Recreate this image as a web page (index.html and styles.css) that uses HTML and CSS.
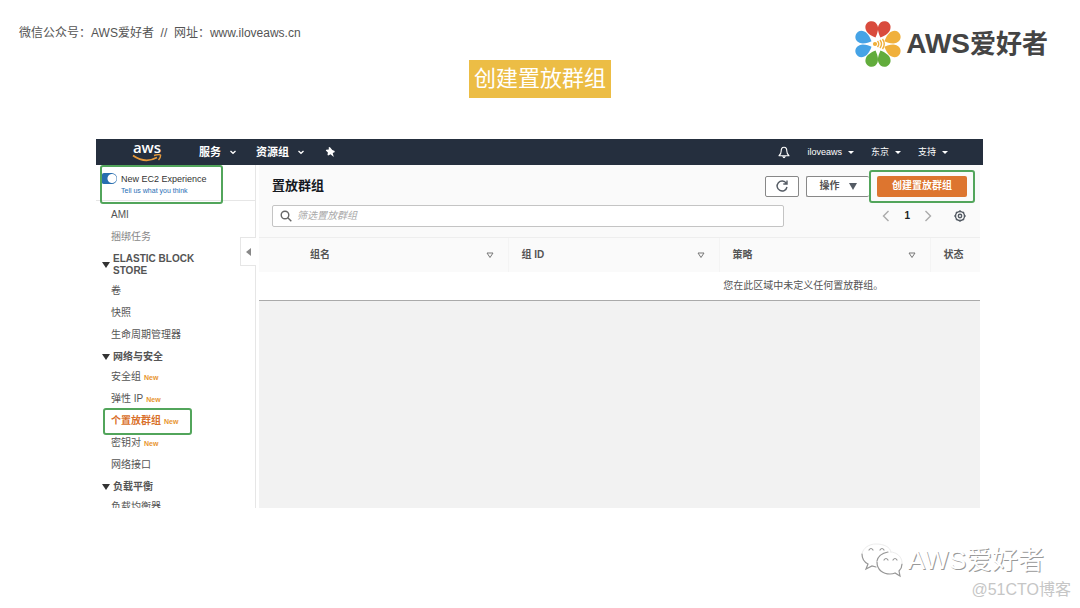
FILE: index.html
```html
<!DOCTYPE html>
<html lang="zh-CN">
<head>
<meta charset="utf-8">
<meta name="viewport" content="width=device-width, initial-scale=1">
<title>创建置放群组</title>
<link rel="stylesheet" href="styles.css">
</head>
<body>
<div class="slide">
  <header class="slide-header">
    <p class="account">微信公众号：AWS爱好者&nbsp; //&nbsp; 网址：www.iloveaws.cn</p>
    <div class="brand">
      <svg class="brand-mark" viewBox="-24 -24 48 48" aria-hidden="true">
        <defs>
          <path id="petal" d="M0-7C-2-9-6.200-13-6.200-17.500C-6.200-21.500-3.500-24 0-24S6.200-21.500 6.200-17.500C6.200-13 2-9 0-7Z"/>
        </defs>
        <g fill="#d94b3d"><use href="#petal" transform="rotate(-21)"/><use href="#petal" transform="rotate(21)"/></g>
        <g fill="#f0b03c"><use href="#petal" transform="rotate(67)"/><use href="#petal" transform="rotate(113)"/></g>
        <g fill="#62ac3c"><use href="#petal" transform="rotate(159)"/><use href="#petal" transform="rotate(201)"/></g>
        <g fill="#45a3e6"><use href="#petal" transform="rotate(247)"/><use href="#petal" transform="rotate(293)"/></g>
        <g fill="none" stroke="#f0b03c" stroke-width="1.400"><circle cx="-3" cy="0" r="1.400" fill="#f0b03c"/><path d="M-.500-3Q2 0-.500 3M2-4Q5 0 2 4M4.500-5Q8 0 4.500 5"/></g>
      </svg>
      <span class="brand-name"><span class="brand-latin">AWS</span>爱好者</span>
    </div>
  </header>

  <h1 class="slide-title">创建置放群组</h1>

  <section class="console">
    <nav class="topbar">
      <a class="aws" href="#" aria-label="aws">
        <span class="aws-word">aws</span>
        <svg class="aws-smile" viewBox="0 0 30 9" aria-hidden="true"><path d="M1 1.500Q13 10 25 3.500" fill="none" stroke="#e79a3c" stroke-width="1.800"/><path d="M22 1.500Q27 0 28.500 1Q29 3 26.500 6" fill="none" stroke="#e79a3c" stroke-width="1.400"/></svg>
      </a>
      <button class="menu services">服务<svg class="chev" viewBox="0 0 8 8"><path d="M1.500 3L4 5.300L6.500 3"/></svg></button>
      <button class="menu">资源组<svg class="chev" viewBox="0 0 8 8"><path d="M1.500 3L4 5.300L6.500 3"/></svg></button>
      <button class="icon-button" aria-label="固定"><svg class="pin" viewBox="0 0 12 12"><path d="M4.800 1L6 1.200L8.300 4L10.700 5L10.500 6.200L8.700 7L9.800 11L6.500 8.200L4.300 9.500L3.500 9L3.900 6.500L1.800 4.500L2.200 3.800L4.800 3.600Z" fill="#fff"/></svg></button>
      <div class="topbar-right">
        <button class="icon-button" aria-label="通知"><svg class="bell" viewBox="0 0 12 13"><path d="M6 1.300C3.800 1.300 3.200 3 3.200 5C3.200 7.500 2.500 8.500 1 9.700H11C9.500 8.500 8.800 7.500 8.800 5C8.800 3 8.200 1.300 6 1.300ZM4.800 10.300Q6 13 7.200 10.300" fill="none" stroke="#fff" stroke-width="1.100" stroke-linejoin="round"/></svg></button>
        <button class="menu small">iloveaws<i class="caret"></i></button>
        <button class="menu small">东京<i class="caret"></i></button>
        <button class="menu small">支持<i class="caret"></i></button>
      </div>
    </nav>

    <div class="workspace">
      <aside class="sidebar">
        <div class="experience">
          <div class="experience-box marked">
            <input class="switch" type="checkbox" id="experience" checked>
            <div>
              <label for="experience">New EC2 Experience</label>
              <a href="#">Tell us what you think</a>
            </div>
          </div>
        </div>
        <ul class="links">
          <li><a href="#">AMI</a></li>
          <li><a class="muted" href="#">捆绑任务</a></li>
        </ul>
        <button class="group">ELASTIC BLOCK STORE</button>
        <ul class="links">
          <li><a href="#">卷</a></li>
          <li><a href="#">快照</a></li>
          <li><a href="#">生命周期管理器</a></li>
        </ul>
        <button class="group">网络与安全</button>
        <ul class="links">
          <li><a href="#">安全组<span class="new">New</span></a></li>
          <li><a href="#">弹性 IP<span class="new">New</span></a></li>
          <li><a class="current" href="#">个置放群组<span class="new">New</span></a></li>
          <li><a href="#">密钥对<span class="new">New</span></a></li>
          <li><a href="#">网络接口</a></li>
        </ul>
        <button class="group">负载平衡</button>
        <ul class="links">
          <li><a href="#">负载均衡器</a></li>
        </ul>
      </aside>
      <button class="collapse" aria-label="折叠导航"></button>

      <main class="content">
        <div class="panel-head">
          <div class="title-row">
            <h2>置放群组</h2>
            <button class="btn refresh" aria-label="刷新"><svg viewBox="0 0 14 14"><path d="M11.300 4.300A5 5 0 1 0 12 8M12 1.500V5H8.300" fill="none" stroke="#545b64" stroke-width="1.400"/></svg></button>
            <button class="btn actions">操作<i class="triangle"></i></button>
            <div class="create-box marked"><button class="create">创建置放群组</button></div>
          </div>
          <div class="filter-row">
            <label class="search">
              <svg viewBox="0 0 12 12" aria-hidden="true"><circle cx="5" cy="5" r="3.800"/><path d="M7.800 7.800L11.300 11.300"/></svg>
              <input type="text" placeholder="筛选置放群组" aria-label="筛选置放群组">
            </label>
            <div class="pager">
              <button class="icon-button" aria-label="上一页"><svg class="arrow" viewBox="0 0 8 12"><path d="M6.500 1L1.500 6L6.500 11"/></svg></button>
              <span class="page">1</span>
              <button class="icon-button" aria-label="下一页"><svg class="arrow" viewBox="0 0 8 12"><path d="M1.500 1L6.500 6L1.500 11"/></svg></button>
              <button class="icon-button settings" aria-label="设置"><svg class="gear" viewBox="0 0 12 12"><circle cx="6" cy="6" r="4.500"/><circle cx="6" cy="6" r="1.700"/><path d="M6 .300V1.500M6 10.500V11.700M.300 6H1.500M10.500 6H11.700M2 2L2.800 2.800M9.200 9.200L10 10M2 10L2.800 9.200M9.200 2.800L10 2"/></svg></button>
            </div>
          </div>
        </div>
        <table class="groups">
          <colgroup><col class="col-check"><col><col><col><col class="col-state"></colgroup>
          <thead>
            <tr>
              <td></td>
              <th scope="col"><span class="th">组名<svg class="sort" viewBox="0 0 8 7"><path d="M1 1H7L4 5.500Z"/></svg></span></th>
              <th scope="col"><span class="th">组 ID<svg class="sort" viewBox="0 0 8 7"><path d="M1 1H7L4 5.500Z"/></svg></span></th>
              <th scope="col"><span class="th">策略<svg class="sort" viewBox="0 0 8 7"><path d="M1 1H7L4 5.500Z"/></svg></span></th>
              <th scope="col"><span class="th">状态</span></th>
            </tr>
          </thead>
          <tbody><tr><td class="empty" colspan="5">您在此区域中未定义任何置放群组。</td></tr></tbody>
        </table>
      </main>
    </div>
  </section>

  <footer class="slide-footer">
    <div class="watermark">
      <svg class="wechat" viewBox="0 0 44 36" aria-hidden="true">
        <g fill="none" stroke="#ededed" stroke-width="1"><path d="M2 12C3 6 9 2 16 2C24 2 30 5 31 10"/><path d="M30 10C37 10 42 15 42 21"/></g>
        <g fill="none" stroke="#969696" stroke-width="1.200" stroke-linecap="round"><path d="M2 12C2 17 4 20 8 22L6 27L12 24L16 25"/><path d="M17 20C17 28 23 32 30 32Q33 32 35 31L40 34L39 29Q42 26 42 22"/><path d="M17 19C18 14 23 11 28 10"/><path d="M9 8Q11 5 13 8M20 8Q22 5 24 8M24 18Q26 15 28 18M33 18Q35 15 37 18"/></g>
      </svg>
      <span>AWS爱好者</span>
    </div>
    <p class="credit">@51CTO博客</p>
  </footer>
</div>
</body>
</html>
```
FILE: styles.css
```css
* { box-sizing: border-box; }

body {
  margin: 0;
  background: #fff;
  color: #545454;
  font-family: "Liberation Sans", "Noto Sans CJK SC", sans-serif;
  font-size: 10px;
  line-height: 12px;
}

h1, h2, p, ul { margin: 0; padding: 0; }
ul { list-style: none; }
a { color: inherit; text-decoration: none; }
button, input { font: inherit; color: inherit; }
button { margin: 0; padding: 0; border: 0; background: none; cursor: pointer; }
svg { display: block; flex: none; }

.slide {
  display: flex;
  flex-direction: column;
  height: 100vh;
  min-height: 480px;
}

.slide-header {
  display: flex;
  justify-content: space-between;
  align-items: flex-start;
  height: 60px;
  padding: 20px 32px 0 19px;
}
.account { padding-top: 4px; font-size: 12px; line-height: 18px; }
.brand { display: flex; align-items: center; gap: 4px; }
.brand-mark { width: 48px; height: 48px; }
.brand-name {
  display: flex;
  align-items: baseline;
  color: #444;
  font-size: 26px;
  font-weight: 700;
  line-height: 36px;
}
.brand-latin { font-size: 28px; }

.slide-title {
  align-self: center;
  padding: 0 5px;
  background: #ecbd45;
  color: #fff;
  font-size: 22px;
  font-weight: 400;
  line-height: 38px;
}

.console {
  display: flex;
  flex: 1;
  flex-direction: column;
  min-height: 0;
  margin: 41px 97px 0 96px;
}

.topbar {
  display: flex;
  flex: none;
  align-items: center;
  height: 26px;
  padding: 0 35px 0 36px;
  background: #252f3e;
  color: #fff;
}
.aws { display: flex; flex-direction: column; align-items: center; width: 30px; }
.aws-word { padding-bottom: 1px; font-family: "Open Sans", sans-serif; font-size: 15px; font-weight: 600; line-height: 12px; }
.aws-smile { width: 30px; height: 9px; }
.menu { display: flex; align-items: center; gap: 8px; margin-right: 19px; font-size: 11px; font-weight: 700; }
.services { margin-left: 37px; }
.chev { width: 8px; height: 8px; fill: none; stroke: #fff; stroke-width: 1.300; }
.pin { width: 12px; height: 12px; }
.icon-button { display: block; }
.bell { width: 12px; height: 13px; }
.topbar-right { display: flex; align-items: center; gap: 17px; margin-left: auto; }
.menu.small { gap: 6px; margin: 0; font-size: 9px; font-weight: 400; }
.caret { border: 3px solid transparent; border-top-color: #fff; border-bottom: 0; }

.workspace { position: relative; display: flex; flex: 1; min-height: 0; padding-right: 3px; }

.sidebar {
  flex: none;
  width: 160px;
  overflow: hidden;
  border-right: 1px solid #e6e6e6;
}
.marked { border: 2px solid #52a55b; border-radius: 3px; }
.experience { height: 36px; margin-bottom: 3px; padding-left: 4px; border-bottom: 1px solid #e6e6e6; }
.experience-box { display: flex; gap: 4px; width: 123px; height: 39px; padding: 6px 0 0; }
.experience-box label, .experience-box a { display: block; }
.experience-box label { color: #333; font-size: 9px; line-height: 13px; }
.experience-box a { color: #276eb5; font-size: 7px; line-height: 10px; white-space: nowrap; }
.switch {
  appearance: none;
  flex: none;
  width: 15px;
  height: 11px;
  margin: 0;
  border-radius: 2px 6px 6px 2px;
  background: radial-gradient(circle at 10px 50%, #fff 4px, #286eb0 5px);
}

.links { padding-left: 15px; }
.links li { height: 22px; line-height: 22px; }
.links a { position: relative; display: inline-block; }
.muted { color: #888; }
.new { margin-left: 3px; color: #e8952f; font-size: 7px; font-weight: 700; }
.current { color: #d9702a; font-weight: 700; }
.current::after {
  content: "";
  position: absolute;
  inset: -2px -14px -2px -8px;
  border: 2px solid #52a55b;
  border-radius: 3px;
}
.group {
  display: flex;
  align-items: center;
  gap: 3px;
  width: 110px;
  padding: 5px 0 3px 6px;
  font-weight: 700;
  text-align: left;
}
.group::before {
  content: "";
  flex: none;
  border: 4px solid transparent;
  border-top: 6px solid #333;
  border-bottom: 0;
}

.collapse {
  position: absolute;
  top: 72px;
  left: 144px;
  display: grid;
  place-items: center;
  width: 16px;
  height: 29px;
  border: 1px solid #e6e6e6;
  border-right: 0;
  background: #fff;
}
.collapse::before { content: ""; border: 4px solid transparent; border-right: 5px solid #888; border-left: 0; }

.content { flex: 1; min-width: 0; margin-left: 3px; background: #f2f2f2; }
.panel-head { padding: 4px 5px 10px 13px; border-bottom: 1px solid #eee; background: #fafafa; }
.title-row { display: flex; align-items: center; height: 34px; }
.title-row h2 { margin-right: auto; color: #16191f; font-size: 13px; line-height: 20px; }
.btn {
  display: flex;
  align-items: center;
  justify-content: center;
  height: 21px;
  border: 1px solid #888;
  border-radius: 2px;
  background: #fff;
  font-weight: 700;
}
.refresh { width: 34px; margin-right: 7px; }
.refresh svg { width: 14px; height: 14px; }
.actions { gap: 9px; width: 63px; border-right: 0; }
.triangle { border: 4px solid transparent; border-top: 7px solid #545b64; border-bottom: 0; }
.create-box { padding: 4px 6px; }
.create { display: block; width: 90px; height: 21px; border-radius: 2px; background: #dd752f; color: #fff; font-weight: 700; }

.filter-row { display: flex; align-items: center; justify-content: space-between; gap: 98px; padding-top: 2px; }
.search {
  display: flex;
  flex: 1;
  align-items: center;
  gap: 5px;
  height: 22px;
  padding: 0 7px;
  border: 1px solid #c4c4c4;
  border-radius: 2px;
  background: #fff;
}
.search svg { width: 12px; height: 12px; fill: none; stroke: #666; stroke-width: 1.400; }
.search input { flex: 1; min-width: 0; padding: 0; border: 0; outline: 0; background: none; }
.search input::placeholder { color: #aaa; font-style: italic; opacity: 1; }
.pager { display: flex; align-items: center; gap: 14px; padding-right: 9px; }
.arrow { width: 8px; height: 12px; fill: none; stroke: #aaa; stroke-width: 1.400; }
.page { color: #222; font-weight: 700; }
.settings { margin-left: 8px; }
.gear { width: 12px; height: 12px; fill: none; stroke: #545b64; stroke-width: 1.400; }

.groups { width: 100%; table-layout: fixed; border-collapse: collapse; }
.col-check { width: 38px; }
.col-state { width: 50px; }
.groups thead { background: #fafafa; }
.groups thead tr { height: 34px; }
.groups th { padding: 0 14px 0 13px; text-align: left; white-space: nowrap; }
.groups th + th { border-left: 1px solid #f4f4f4; }
.groups th:last-child { padding-right: 0; }
.th { display: flex; align-items: center; justify-content: space-between; }
.sort { width: 8px; height: 7px; fill: none; stroke: #777; }
.groups .empty {
  height: 28px;
  padding: 0 0 0 51%;
  border-bottom: 1px solid #aaa;
  background: #fff;
  text-align: center;
}

.slide-footer {
  display: flex;
  flex: none;
  flex-direction: column;
  align-items: flex-end;
  height: 100px;
  padding: 33px 9px 0 0;
}
.watermark {
  display: flex;
  align-items: center;
  gap: 4px;
  padding-right: 27px;
  color: #fff;
  font-size: 26px;
  line-height: 38px;
  text-shadow: 1px 1px 0 #999;
}
.wechat { width: 44px; height: 36px; }
.credit { color: #c6c6c6; font-size: 16px; line-height: 22px; }
```
